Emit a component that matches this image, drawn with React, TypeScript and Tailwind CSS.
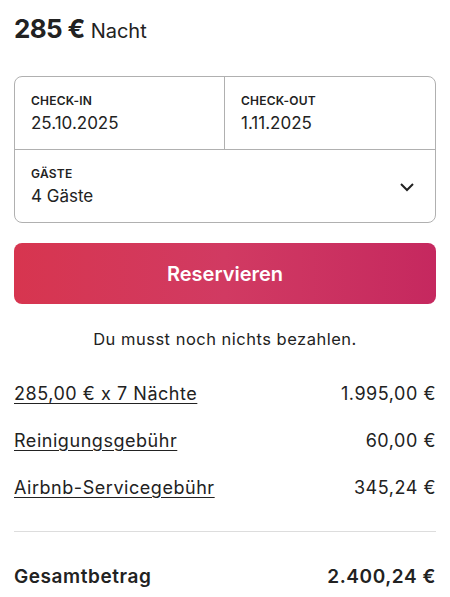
export default function App() {
  const rows = [
    { label: "285,00 € x 7 Nächte", value: "1.995,00 €" },
    { label: "Reinigungsgebühr", value: "60,00 €" },
    { label: "Airbnb-Servicegebühr", value: "345,24 €" },
  ];

  return (
    <div className="min-h-[597px] bg-white px-[14px] pt-[13px] text-[#222222] font-['Inter',sans-serif]">
      <div className="flex items-baseline gap-1.5">
        <span className="text-[26px] font-bold leading-8 tracking-tight">285 €</span>
        <span className="text-[20px]">Nacht</span>
      </div>

      <div className="mt-[30px] rounded-lg border border-[#b0b0b0]">
        <div className="grid grid-cols-2 border-b border-[#b0b0b0]">
          <div className="h-[72px] border-r border-[#b0b0b0] pl-4 pt-[16px]">
            <p className="text-[12px] font-semibold leading-4 tracking-[0.02em]">CHECK-IN</p>
            <p className="mt-[3px] text-[17px] leading-[22px]">25.10.2025</p>
          </div>
          <div className="h-[72px] pl-4 pt-[16px]">
            <p className="text-[12px] font-semibold leading-4 tracking-[0.02em]">CHECK-OUT</p>
            <p className="mt-[3px] text-[17px] leading-[22px]">1.11.2025</p>
          </div>
        </div>
        <div className="flex h-[72px] items-center justify-between pl-4 pr-5">
          <div>
            <p className="text-[12px] font-semibold leading-4 tracking-[0.02em]">GÄSTE</p>
            <p className="mt-[3px] text-[17px] leading-[22px]">4 Gäste</p>
          </div>
          <svg viewBox="0 0 32 32" className="h-4 w-4" fill="none" stroke="currentColor" strokeWidth="4">
            <path d="M28 12 L16 24 L4 12" />
          </svg>
        </div>
      </div>

      <button className="mt-5 flex h-[61px] w-full items-center justify-center rounded-lg bg-gradient-to-r from-[#d7354f] via-[#d13a62] to-[#c5285f] text-[20px] font-semibold text-white">
        Reservieren
      </button>

      <p className="mt-[23px] text-center text-[16.5px] tracking-[0.03em]">Du musst noch nichts bezahlen.</p>

      <div className="mt-[31px] flex flex-col gap-[25px]">
        {rows.map((row) => (
          <div key={row.label} className="flex items-center justify-between text-[18px] leading-[22px] tracking-[0.03em]">
            <span className="underline underline-offset-[3px]">{row.label}</span>
            <span>{row.value}</span>
          </div>
        ))}
      </div>

      <div className="mt-[32px] border-t border-[#dddddd]" />

      <div className="mt-[34px] flex items-center justify-between text-[19px] font-semibold leading-[22px] tracking-[0.03em]">
        <span>Gesamtbetrag</span>
        <span>2.400,24 €</span>
      </div>
    </div>
  );
}
